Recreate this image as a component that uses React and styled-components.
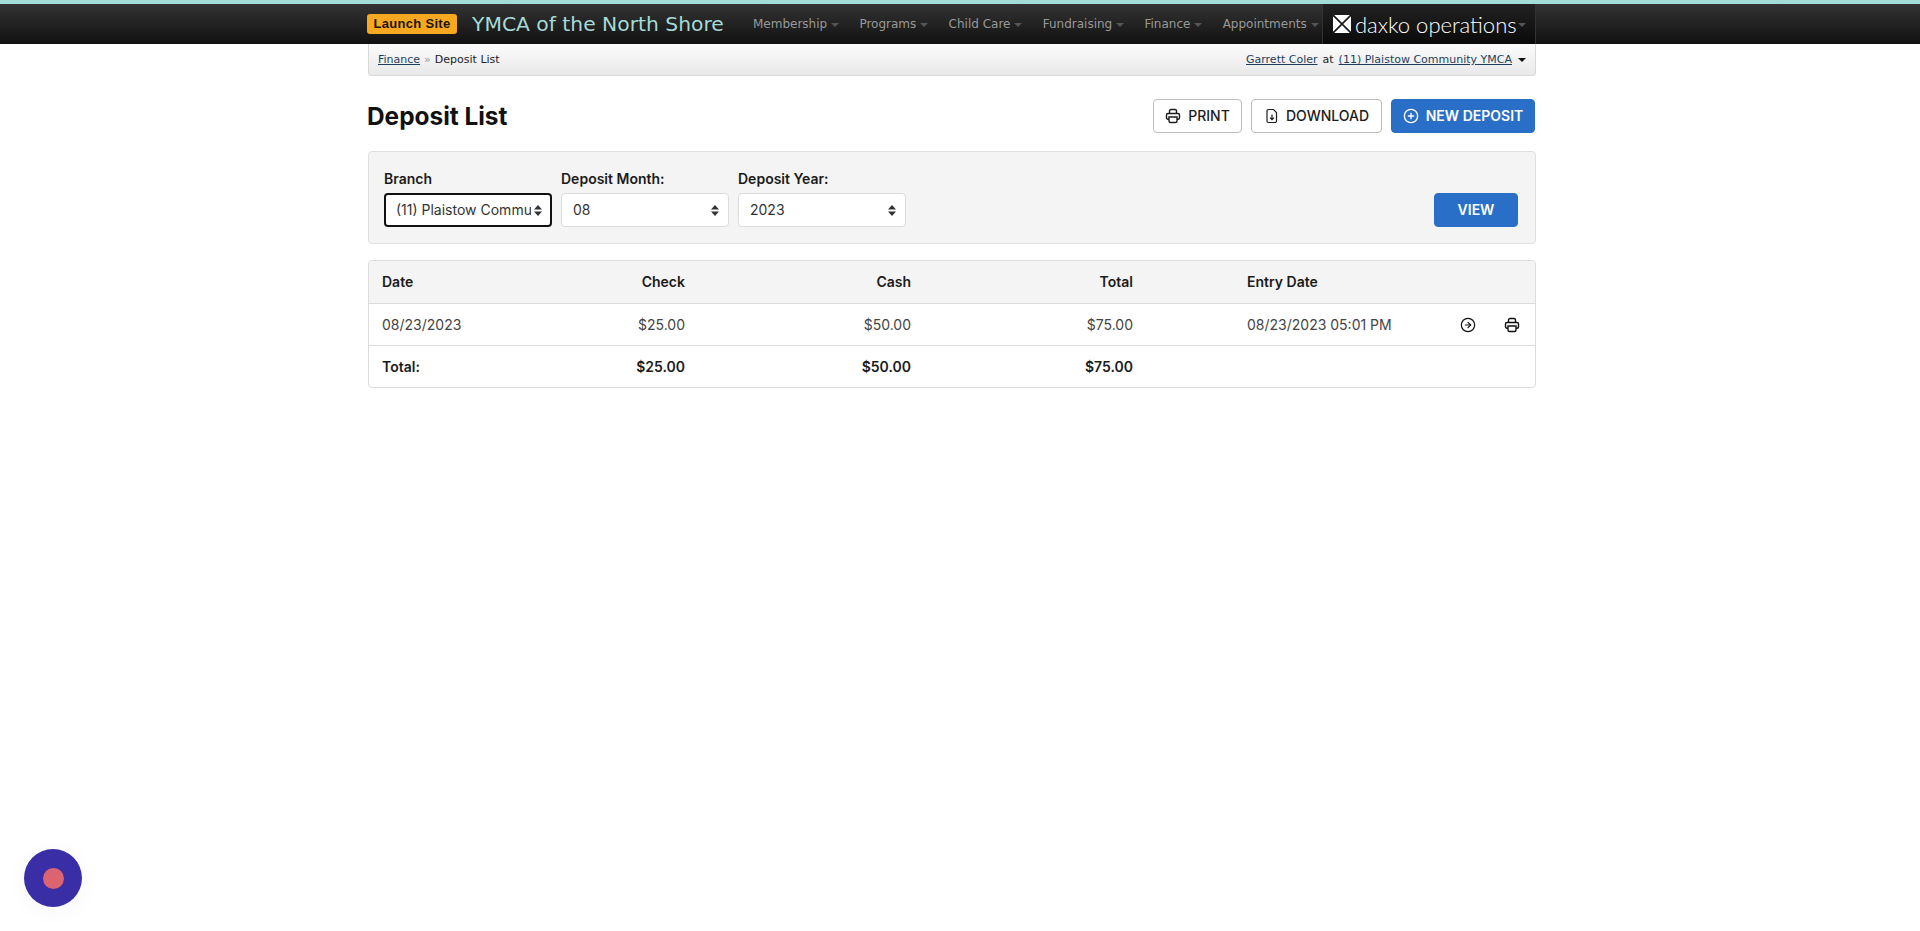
import React from "react";
import styled, { createGlobalStyle } from "styled-components";
import { CirclePlus, CircleArrowRight } from "lucide-react";

const GlobalStyle = createGlobalStyle`
  html, body {
    margin: 0;
    padding: 0;
    background: #fff;
    color: #212529;
    font-family: Inter, "Liberation Sans", sans-serif;
    font-size: 14px;
  }
`;

const Page = styled.div`
  min-height: 931px;
  position: relative;
  overflow: hidden;
`;

const TopBar = styled.header`
  height: 40px;
  border-top: 4px solid #a3dcd8;
  background: linear-gradient(#333333, #111111);
  padding-right: 16px;
`;

const Wrap = styled.div`
  width: 1168px;
  margin: 0 auto;
`;

const PageWrap = styled.div`
  padding-right: 16px;
`;

const TopInner = styled(Wrap)`
  height: 40px;
  display: flex;
  align-items: center;
  font-family: "DejaVu Sans", Verdana, sans-serif;
`;

const LaunchBadge = styled.a`
  width: 90px;
  height: 20px;
  margin-left: -1px;
  border-radius: 3px;
  background: #f6a821;
  color: #1c1505;
  font-size: 13px;
  font-weight: 700;
  line-height: 20px;
  text-align: center;
  font-family: "Liberation Sans", sans-serif;
  letter-spacing: 0.3px;
`;

const Brand = styled.a`
  margin-left: 15px;
  width: 281px;
  color: #a5dbd6;
  font-size: 20.3px;
  white-space: nowrap;
`;

const Nav = styled.nav`
  display: flex;
  flex: 1;
  align-items: center;
  gap: 20.25px;
`;

const NavItem = styled.a`
  display: flex;
  align-items: center;
  gap: 4px;
  color: #999999;
  font-size: 12px;
  white-space: nowrap;
`;

const Caret = styled.span`
  display: inline-block;
  width: 0;
  height: 0;
  margin-top: 1px;
  margin-left: ${({ $gap }) => $gap || 0}px;
  border-left: 4px solid transparent;
  border-right: 4px solid transparent;
  border-top: 4px solid ${({ $color }) => $color || "#555"};
`;

const DaxkoBox = styled.div`
  display: flex;
  align-items: center;
  width: 214px;
  height: 40px;
  padding-left: 10px;
  box-sizing: border-box;
  background: linear-gradient(#222222, #0a0a0a);
  border-left: 1px solid #333;
  border-right: 1px solid #333;
  color: #fff;
`;

const DaxkoText = styled.span`
  margin: 0 1px 0 4px;
  font-family: Lato, "Noto Sans", sans-serif;
  font-size: 22px;
  font-weight: 300;
  white-space: nowrap;
`;

const Crumbs = styled(Wrap)`
  height: 32px;
  box-sizing: border-box;
  padding: 0 9px 0 9px;
  display: flex;
  align-items: center;
  justify-content: space-between;
  background: linear-gradient(#fbfbfb, #e9e9e9);
  border: 1px solid #d8d8d8;
  border-top: 0;
  border-radius: 0 0 4px 4px;
  font-family: "DejaVu Sans", Verdana, sans-serif;
  font-size: 11px;
  color: #222;
`;

const CrumbLink = styled.a`
  color: #1f3f5f;
  text-decoration: underline;
`;

const CrumbSide = styled.div`
  display: flex;
  align-items: center;
  gap: 5px;
`;

const Sep = styled.span`
  color: #999;
  margin: 0 4px;
`;

const TitleRow = styled.div`
  display: flex;
  align-items: center;
  justify-content: space-between;
  margin-top: 23px;
  height: 34px;
`;

const Title = styled.h1`
  margin: 0 0 0 -1px;
  font-size: 24.4px;
  font-weight: 700;
  color: #111;
`;

const Actions = styled.div`
  display: flex;
  gap: 9px;
  margin-right: 1px;
`;

const Button = styled.button`
  display: inline-flex;
  align-items: center;
  justify-content: center;
  gap: ${({ $gap }) => $gap || 7}px;
  width: ${({ $w }) => $w}px;
  height: 34px;
  padding: 0 0 1px;
  box-sizing: border-box;
  border-radius: 4px;
  border: 1px solid ${({ $primary }) => ($primary ? "#2a6fc7" : "#bdbdbd")};
  background: ${({ $primary }) => ($primary ? "#2a6fc7" : "#fff")};
  color: ${({ $primary }) => ($primary ? "#fff" : "#1c1c1c")};
  font-family: Inter, "Liberation Sans", sans-serif;
  font-size: 14px;
  font-weight: ${({ $primary }) => ($primary ? 600 : 500)};
  text-transform: uppercase;
  white-space: nowrap;
`;

const FilterPanel = styled.form`
  display: flex;
  align-items: flex-end;
  justify-content: space-between;
  height: 93px;
  margin-top: 18px;
  padding: 0 17px 16px 15px;
  box-sizing: border-box;
  background: #f4f4f4;
  border: 1px solid #e1e1e1;
  border-radius: 4px;
`;

const Fields = styled.div`
  display: flex;
  gap: 9px;
`;

const Field = styled.label`
  display: flex;
  flex-direction: column;
  gap: 6px;
  font-weight: 600;
  font-size: 14px;
  line-height: 17px;
  color: #1b1b1b;
`;

const SelectBox = styled.div`
  position: relative;
  width: 168px;
  height: 34px;
`;

const Select = styled.select`
  appearance: none;
  width: 100%;
  height: 100%;
  box-sizing: border-box;
  padding: 0 19px 2px ${({ $focused }) => ($focused ? 10 : 11)}px;
  border-radius: 4px;
  background: #fff;
  border: ${({ $focused }) => ($focused ? "2px solid #111" : "1px solid #dcdcdc")};
  font-family: Inter, "Liberation Sans", sans-serif;
  font-size: 14px;
  color: #333;
`;

const Arrows = styled.svg`
  position: absolute;
  right: 10px;
  top: 12px;
  width: 8px;
  height: 11px;
  pointer-events: none;
`;

const TableBox = styled.div`
  margin-top: 16px;
  border: 1px solid #dcdcdc;
  border-radius: 4px;
  overflow: hidden;
`;

const Table = styled.table`
  width: 100%;
  border-collapse: collapse;
  table-layout: fixed;
`;

const Th = styled.th`
  height: 41px;
  padding: 0 14px 1px ${({ $indent }) => $indent || 13}px;
  background: #f4f4f4;
  border-bottom: 1px solid #dcdcdc;
  font-size: 14px;
  font-weight: 600;
  color: #1b1b1b;
  text-align: ${({ $right }) => ($right ? "right" : "left")};
`;

const Td = styled.td`
  height: 41px;
  padding: 0 14px 0 ${({ $indent }) => $indent || 13}px;
  border-bottom: ${({ $last }) => ($last ? "0" : "1px solid #dcdcdc")};
  font-size: 14px;
  font-weight: ${({ $bold }) => ($bold ? 600 : 400)};
  color: ${({ $bold }) => ($bold ? "#1b1b1b" : "#444444")};
  text-align: ${({ $right }) => ($right ? "right" : "left")};
`;

const IconCell = styled(Td)`
  padding: 0;
  text-align: center;
  line-height: 0;
  color: #111;
`;

const Bubble = styled.div`
  position: absolute;
  left: 24px;
  top: 849px;
  width: 58px;
  height: 58px;
  display: flex;
  align-items: center;
  justify-content: center;
  border-radius: 50%;
  background: #3a2ea6;
  box-shadow: 0 4px 24px rgba(0, 0, 0, 0.04);
`;

const BubbleDot = styled.div`
  width: 21px;
  height: 21px;
  border-radius: 50%;
  background: #dc6470;
`;

const navItems = ["Membership", "Programs", "Child Care", "Fundraising", "Finance", "Appointments"];

const filters = [
  { label: "Branch", value: "(11) Plaistow Community YMCA", focused: true },
  { label: "Deposit Month:", value: "08" },
  { label: "Deposit Year:", value: "2023" },
];

const columnWidths = [165, 165, 226, 222, 301, 40, 47];

const DaxkoMark = () => (
  <svg width="18" height="18" viewBox="0 0 18 18">
    <rect width="18" height="18" rx="2" fill="#fff" />
    <path d="M0 0 18 18M18 0 0 18" stroke="#161616" strokeWidth="1.6" />
  </svg>
);

const PrintIcon = ({ size = 16 }) => (
  <svg width={size} height={size} viewBox="0 0 16 16" fill="none" stroke="currentColor" strokeWidth="1.4">
    <path d="M4.5 5.5V3A1.5 1.5 0 0 1 6 1.500h4A1.500 1.500 0 0 1 11.500 3v2.500" />
    <path d="M4 11.200H3a1.500 1.500 0 0 1-1.500-1.500V7A1.500 1.500 0 0 1 3 5.500h10A1.500 1.500 0 0 1 14.500 7v2.700a1.500 1.500 0 0 1-1.500 1.500h-1" />
    <path d="M4 9h8v4a1.500 1.500 0 0 1-1.500 1.500h-5A1.500 1.500 0 0 1 4 13Z" />
  </svg>
);

const DownloadIcon = () => (
  <svg width="16" height="16" viewBox="0 0 16 16" fill="none" stroke="currentColor" strokeWidth="1.2">
    <path d="M4.500 1.500h5l3 3v8.500a1.500 1.500 0 0 1-1.500 1.500H4.500A1.500 1.500 0 0 1 3 13V3a1.500 1.500 0 0 1 1.500-1.500Z" />
    <path d="M8 6.500v5M6 9.700l2 2 2-2" />
  </svg>
);

const App = () => (
  <Page>
    <GlobalStyle />
    <TopBar>
      <TopInner>
        <LaunchBadge>Launch Site</LaunchBadge>
        <Brand>YMCA of the North Shore</Brand>
        <Nav>
          {navItems.map((item) => (
            <NavItem key={item}>
              {item}
              <Caret />
            </NavItem>
          ))}
        </Nav>
        <DaxkoBox>
          <DaxkoMark />
          <DaxkoText>daxko operations</DaxkoText>
          <Caret />
        </DaxkoBox>
      </TopInner>
    </TopBar>

    <PageWrap>
      <Crumbs>
        <div>
          <CrumbLink>Finance</CrumbLink>
          <Sep>»</Sep>
          Deposit List
        </div>
        <CrumbSide>
          <CrumbLink>Garrett Coler</CrumbLink> at <CrumbLink>(11) Plaistow Community YMCA</CrumbLink>
          <Caret $color="#111" $gap={1} />
        </CrumbSide>
      </Crumbs>

      <Wrap>
        <TitleRow>
          <Title>Deposit List</Title>
          <Actions>
            <Button $w={89}>
              <PrintIcon />
              Print
            </Button>
            <Button $w={131} $gap={6}>
              <DownloadIcon />
              Download
            </Button>
            <Button $w={144} $primary>
              <CirclePlus size={16} />
              New Deposit
            </Button>
          </Actions>
        </TitleRow>

        <FilterPanel>
          <Fields>
            {filters.map((f) => (
              <Field key={f.label}>
                {f.label}
                <SelectBox>
                  <Select $focused={f.focused} defaultValue={f.value}>
                    <option>{f.value}</option>
                  </Select>
                  <Arrows viewBox="0 0 8 11">
                    <path d="M4 0 8 4.500H0ZM4 11 0 6.500H8Z" fill="#333" />
                  </Arrows>
                </SelectBox>
              </Field>
            ))}
          </Fields>
          <Button $w={84} $primary type="button">View</Button>
        </FilterPanel>

        <TableBox>
          <Table>
            <colgroup>
              {columnWidths.map((w, i) => (
                <col key={i} width={w} />
              ))}
            </colgroup>
            <thead>
              <tr>
                <Th>Date</Th>
                <Th $right>Check</Th>
                <Th $right>Cash</Th>
                <Th $right>Total</Th>
                <Th $indent={100}>Entry Date</Th>
                <Th />
                <Th />
              </tr>
            </thead>
            <tbody>
              <tr>
                <Td>08/23/2023</Td>
                <Td $right>$25.00</Td>
                <Td $right>$50.00</Td>
                <Td $right>$75.00</Td>
                <Td $indent={100}>08/23/2023 05:01 PM</Td>
                <IconCell><CircleArrowRight size={16} strokeWidth={1.8} /></IconCell>
                <IconCell><PrintIcon /></IconCell>
              </tr>
              <tr>
                <Td $bold $last>Total:</Td>
                <Td $bold $last $right>$25.00</Td>
                <Td $bold $last $right>$50.00</Td>
                <Td $bold $last $right>$75.00</Td>
                <Td $last />
                <Td $last />
                <Td $last />
              </tr>
            </tbody>
          </Table>
        </TableBox>
      </Wrap>
    </PageWrap>

    <Bubble>
      <BubbleDot />
    </Bubble>
  </Page>
);

export default App;
